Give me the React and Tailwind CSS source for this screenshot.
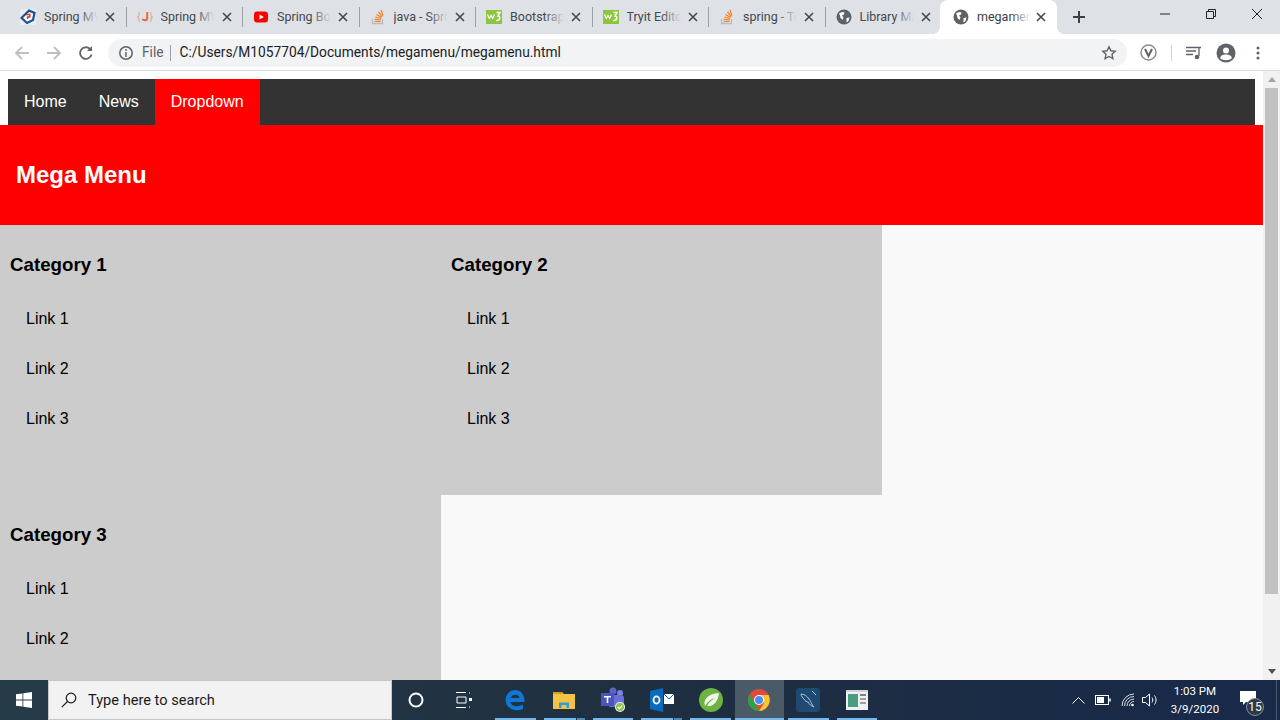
const Close = ({ dark }) => (
  <svg width="10" height="10" viewBox="0 0 10 10" className="shrink-0" fill="none" stroke={dark ? "#3c4043" : "#45484c"} strokeWidth="1.6">
    <path d="M1 1l8 8M9 1l-8 8" />
  </svg>
);
const Globe = () => (
  <svg width="16" height="16" viewBox="0 0 16 16" className="shrink-0">
    <circle cx="8" cy="8" r="7.500" fill="#5f6368" />
    <path d="M3 4.500l3-1.500 2.500.5-.5 2-2 1 1.500 2-1 2.500-2-2-.5-2.500zM10.500 9l3-.5-1 3.500-2 1.500z" fill="#fff" />
  </svg>
);
const Pf = () => (
  <svg width="16" height="16" viewBox="0 0 16 16" className="shrink-0">
    <rect x="0" y="0" width="16" height="16" fill="#e8edf5" />
    <path d="M9 1.500l5.500 2.500-1.500 7-6 3-5.500-5z" fill="#fff" stroke="#1b4f8f" strokeWidth="2.200" />
    <path d="M6 5.500h3.800v2.500H7.500v2" fill="none" stroke="#d9342b" strokeWidth="1.400" />
  </svg>
);
const J = () => (
  <svg width="16" height="16" viewBox="0 0 16 16" className="shrink-0" fill="none" stroke="#f0653b">
    <path d="M3 3.500c-1.500 0-1 1-1 2.500S1 8 .5 8c.5 0 1.500.5 1.500 2s-.5 2.500 1 2.500M13 3.500c1.500 0 1 1 1 2.500s1 2 1.500 2c-.5 0-1.500.5-1.500 2s.5 2.500-1 2.500" strokeWidth=".8" opacity=".7" />
    <path d="M10.200 3V9.500c0 2.300-3.700 2.300-4.700 .5" strokeWidth="2" />
  </svg>
);
const Yt = () => (
  <svg width="16" height="16" viewBox="0 0 16 16" className="shrink-0">
    <rect x="1" y="2.500" width="14" height="11" rx="3" fill="#f00" />
    <path d="M6.500 5.500v5L10.800 8z" fill="#fff" />
  </svg>
);
const So = () => (
  <svg width="16" height="16" viewBox="0 0 16 16" className="shrink-0" fill="none">
    <path d="M2.500 10v4.500h10V10" stroke="#bcbbbb" strokeWidth="1.300" />
    <path d="M4.500 12.500h6M4.700 10.300l6 .6M5.300 8l5.800 1.500M6.500 5.500l5.200 3M8.500 3l3.800 4.600M11 1l2 5.500" stroke="#f48024" strokeWidth="1.200" />
  </svg>
);
const W3 = () => (
  <svg width="16" height="16" viewBox="0 0 16 16" className="shrink-0">
    <rect width="16" height="14" y="1" fill="#8cc63f" />
    <path d="M1.500 5.500l1.800 4 1.700-3 1.700 3 1.800-4" fill="none" stroke="#fff" strokeWidth="1.200" />
    <path d="M10.500 3.500H14l-2 3.500c2.500 0 2.800 5-1.800 4.500" fill="none" stroke="#fff" strokeWidth="1.500" />
  </svg>
);

const tabs = [
  { icon: <Pf />, t: "Spring MVC" },
  { icon: <J />, t: "Spring MVC" },
  { icon: <Yt />, t: "Spring Boot" },
  { icon: <So />, t: "java - Spring" },
  { icon: <W3 />, t: "Bootstrap" },
  { icon: <W3 />, t: "Tryit Editor" },
  { icon: <So />, t: "spring - Tomcat" },
  { icon: <Globe />, t: "Library Ma" },
];

function Tab({ icon, t, active, last }) {
  return (
    <div className={"relative flex items-center h-[34px] shrink-0 " + (active ? "w-[117px] -ml-[1px] pl-[13px] pr-[11px] bg-white rounded-t-[8px]" : "w-[116.500px] pl-[11px] pr-[10.500px]")}>
      {active && <div className="absolute -left-[8px] bottom-0 w-[8px] h-[8px] bg-[radial-gradient(circle_at_0_0,transparent_8px,white_8px)]" />}
      {active && <div className="absolute -right-[8px] bottom-0 w-[8px] h-[8px] bg-[radial-gradient(circle_at_100%_0,transparent_8px,white_8px)]" />}
      {icon}
      <div className={"relative ml-[8px] w-[54px] overflow-hidden whitespace-nowrap text-[12.500px] font-['Roboto','Noto_Sans',sans-serif] " + (active ? "text-[#3c4043]" : "text-[#45484c]")}>
        {t}
        <div className={"absolute right-0 top-0 bottom-0 w-[20px] bg-gradient-to-r from-transparent " + (active ? "to-white" : "to-[#dee1e6]")} />
      </div>
      <div className="ml-auto flex"><Close /></div>
      {!active && !last && <div className="absolute -right-px top-[7px] h-[20px] w-px bg-[#9aa0a6]" />}
    </div>
  );
}

const Win = () => (
  <div className="w-[48px] h-full flex items-center justify-center">
    <svg width="16" height="16" viewBox="0 0 16 16" fill="#fff"><path d="M0 2.300l6.500-.9v6.200H0zM7.300 1.300L16 0v7.600H7.300zM0 8.400h6.500v6.200L0 13.700zM7.300 8.400H16V16l-8.700-1.200z" /></svg>
  </div>
);

const TaskItem = ({ children, active, split }) => (
  <div className={"relative w-[48.800px] h-full flex items-center justify-center shrink-0 " + (active ? "bg-[#4a5a66]" : "")}>
    {children}
    <div className={"absolute bottom-0 h-[2px] flex " + (active ? "left-0 right-0" : "left-[4px] right-[4px]")}>
      <div className="flex-1 bg-[#76b9ed]" />
      {split && <div className="w-[8px] bg-[#4a8cbf] ml-[1px]" />}
    </div>
  </div>
);

function Column({ title, links }) {
  return (
    <div className="w-[441px] h-[270px] bg-[#ccc] pl-[10px] font-['Liberation_Sans',Arial,sans-serif] text-black">
      <h3 className="pt-[28px] text-[18.720px] leading-[24px] h-[52px] font-bold">{title}</h3>
      <div className="pt-[17px]">
        {links.map(l => (
          <div key={l} className="h-[50px] pl-[16px] text-[16px] leading-[50px]">{l}</div>
        ))}
      </div>
    </div>
  );
}

export default function App() {
  const links = ["Link 1", "Link 2", "Link 3"];
  return (
    <div className="w-[1280px] h-[720px] flex flex-col overflow-hidden bg-white">
      <div className="h-[34px] bg-[#dee1e6] flex shrink-0 pl-[9px]">
        {tabs.map((x, i) => <Tab key={i} {...x} last={i === 7} />)}
        <Tab icon={<Globe />} t="megamenu.html" active />
        <div className="w-[44px] h-full flex items-center justify-center">
          <svg width="14" height="14" viewBox="0 0 14 14" stroke="#3c4043" strokeWidth="2"><path d="M7 1v12M1 7h12" /></svg>
        </div>
        <div className="ml-auto flex h-[28px] items-center text-[#222]">
          <div className="w-[46px] flex justify-center"><svg width="10" height="10" viewBox="0 0 10 10" stroke="#222"><path d="M0 5h10" /></svg></div>
          <div className="w-[46px] flex justify-center"><svg width="10" height="10" viewBox="0 0 10 10" fill="none" stroke="#222"><path d="M.5 2.500h7v7h-7zM2.500 2.500v-2h7v7h-2" /></svg></div>
          <div className="w-[46px] flex justify-center"><svg width="12" height="12" viewBox="0 0 12 12" stroke="#222"><path d="M1 1l10 10M11 1L1 11" /></svg></div>
        </div>
      </div>
      <div className="h-[36px] shrink-0 flex items-center bg-white pt-[1px]">
        <div className="w-[108px] flex items-center pl-[14px] gap-[16px]">
          <svg width="16" height="16" viewBox="0 0 16 16" fill="none" stroke="#bcbfc4" strokeWidth="1.800"><path d="M15 8H2M8 2L2 8l6 6" /></svg>
          <svg width="16" height="16" viewBox="0 0 16 16" fill="none" stroke="#bcbfc4" strokeWidth="1.800"><path d="M1 8h13M8 2l6 6-6 6" /></svg>
          <svg width="16" height="16" viewBox="0 0 16 16" fill="none" stroke="#5f6368" strokeWidth="1.800"><path d="M13.500 9.500A5.800 5.800 0 1 1 12 4" /><path d="M14 1v5H9" fill="#5f6368" stroke="none" /></svg>
        </div>
        <div className="w-[1019px] h-[28px] rounded-full bg-[#f1f3f4] flex items-center pl-[10px] pr-[10px] font-['Roboto','Noto_Sans',sans-serif] text-[13.750px] text-[#202124]">
          <svg width="16" height="16" viewBox="0 0 16 16" fill="none" stroke="#5f6368" strokeWidth="1.500"><circle cx="8" cy="8" r="6.200" /><path d="M8 7v5M8 4v1.800" /></svg>
          <span className="ml-[8px] text-[#5f6368]">File</span>
          <span className="w-px h-[16px] bg-[#9aa0a6] ml-[6px] mr-[9px]" />
          <span>C:/Users/M1057704/Documents/megamenu/megamenu.html</span>
          <svg className="ml-auto" width="16" height="16" viewBox="0 0 16 16" fill="none" stroke="#5f6368" strokeWidth="1.400"><path d="M8 1.800l1.900 4 4.300.5-3.200 3 .9 4.300L8 11.500l-3.900 2.100.9-4.300-3.200-3 4.300-.5z" /></svg>
        </div>
        <div className="flex items-center ml-[13px]">
          <svg width="17" height="17" viewBox="0 0 17 17" fill="none"><circle cx="8.500" cy="8.500" r="7.500" stroke="#8a8d91" strokeWidth="1.500" /><path d="M5 5l3.500 7L12 5" stroke="#5f6368" strokeWidth="2" /></svg>
          <span className="w-px h-[16px] bg-[#d0d2d5] ml-[14px] mr-[14px]" />
          <svg width="16" height="14" viewBox="0 0 16 14" fill="none" stroke="#5f6368" strokeWidth="1.300"><path d="M0 1.500h15M0 5h10M0 8.500h7" /><path d="M13 2v8" /><circle cx="11" cy="11" r="2.300" fill="#5f6368" stroke="none" /></svg>
          <svg className="ml-[14px]" width="20" height="20" viewBox="0 0 20 20"><circle cx="10" cy="10" r="9.500" fill="#5f6368" /><circle cx="10" cy="7.500" r="3" fill="#fff" /><path d="M4 15c1-3 3.500-3.500 6-3.500s5 .5 6 3.500c-3 3-9 3-12 0z" fill="#fff" /></svg>
          <svg className="ml-[20px]" width="4" height="14" viewBox="0 0 4 14" fill="#5f6368"><circle cx="2" cy="2" r="1.500" /><circle cx="2" cy="7" r="1.500" /><circle cx="2" cy="12" r="1.500" /></svg>
        </div>
      </div>
      <div className="h-px bg-[#dadce0] shrink-0" />
      <div className="flex h-[609px] shrink-0 overflow-hidden">
        <div className="w-[1263px] bg-[#f9f9f9] overflow-hidden">
          <div className="pt-[8px] bg-white">
            <div className="ml-[8px] mr-[8px] h-[46px] bg-[#333] flex text-[16px] text-white font-['Liberation_Sans',Arial,sans-serif]">
              <div className="px-[16px] leading-[46px]">Home</div>
              <div className="px-[16px] leading-[46px]">News</div>
              <div className="px-[16px] leading-[46px] bg-[#f00]">Dropdown</div>
            </div>
          </div>
          <div className="h-[100px] bg-[#f00] pl-[16px] flex items-center text-[24px] font-bold text-white font-['Liberation_Sans',Arial,sans-serif]">Mega Menu</div>
          <div className="flex flex-wrap w-[882px]">
            <Column title="Category 1" links={links} />
            <Column title="Category 2" links={links} />
            <Column title="Category 3" links={links} />
          </div>
        </div>
        <div className="w-[17px] bg-[#f1f1f1] flex flex-col shrink-0">
          <div className="h-[17px] flex items-center justify-center">
            <svg width="8" height="5" viewBox="0 0 8 5" fill="#a3a3a3"><path d="M4 0l4 5H0z" /></svg>
          </div>
          <div className="h-[506px] ml-[2px] mr-[2px] bg-[#c1c1c1]" />
          <div className="mt-auto h-[17px] flex items-center justify-center">
            <svg width="8" height="5" viewBox="0 0 8 5" fill="#505050"><path d="M4 5l4-5H0z" /></svg>
          </div>
        </div>
      </div>
      <div className="h-[40px] shrink-0 bg-gradient-to-r from-[#253b47] via-[#1f2f40] to-[#18294a] flex items-center text-white font-['Open_Sans','Noto_Sans',sans-serif]">
        <Win />
        <div className="w-[344px] h-full bg-[#f2f2f2] border border-[#c8c8c8] flex items-center pl-[12px] text-[#1b1b1b]">
          <svg width="16" height="16" viewBox="0 0 16 16" fill="none" stroke="#1b1b1b" strokeWidth="1.200"><circle cx="10" cy="6" r="4.800" /><path d="M6.500 9.500L.8 15.200" /></svg>
          <span className="ml-[11px] pt-[2px] font-['Roboto',sans-serif] text-[14.600px]">Type here to search</span>
        </div>
        <div className="w-[48px] flex justify-center">
          <svg width="16" height="16" viewBox="0 0 16 16" fill="none" stroke="#fff" strokeWidth="2"><circle cx="8" cy="8" r="6.500" /></svg>
        </div>
        <div className="w-[47px] flex justify-center">
          <svg width="16" height="16" viewBox="0 0 16 16" fill="none" stroke="#fff"><path d="M0 .5h10M0 15.500h10M1 5h9v6H1zM13 1h1M13 15h1" /><rect x="13" y="6" width="3" height="3" fill="#fff" stroke="none" /></svg>
        </div>
        <div className="flex h-full ml-[4px]">
          <TaskItem>
            <svg width="22" height="22" viewBox="0 0 22 22" fill="none"><path d="M1.500 11C2 4 7 1 11.500 1S21 5 20.500 13H6.500c.3 4.500 7 5.500 12.500 2.500v4.500c-8 3.500-17 0-17.500-9zM6.700 9h8.800c0-4.500-8-4.500-8.800 0z" fill="#0f78d4" /></svg>
          </TaskItem>
          <TaskItem split>
            <svg width="22" height="20" viewBox="0 0 22 20"><path d="M0 2h9l2 2h11v15H0z" fill="#f5c344" /><path d="M0 2h9l1 2H0z" fill="#d69d1f" /><path d="M6 18v-5.500h10V18h-2.500v-3h-5v3z" fill="#2c9fd8" /></svg>
          </TaskItem>
          <TaskItem>
            <svg width="26" height="26" viewBox="0 0 26 26"><circle cx="20" cy="6" r="3" fill="#7b83eb" /><circle cx="13" cy="4" r="3.500" fill="#5c64c8" /><rect x="8" y="8" width="16" height="12" rx="3" fill="#6a71d6" /><rect x="1" y="6" width="13" height="13" fill="#4b53bc" /><path d="M4 9h7v1.600H8.300V16H6.700v-5.400H4z" fill="#fff" /><circle cx="20" cy="20" r="5" fill="#fff" /><circle cx="20" cy="20" r="4.200" fill="#92c353" /><path d="M17.800 20l1.600 1.600 2.800-3" stroke="#fff" strokeWidth="1.200" fill="none" /></svg>
          </TaskItem>
          <TaskItem split>
            <svg width="24" height="24" viewBox="0 0 24 24"><path d="M0 3l13-3v24L0 21z" fill="#0a6bbd" /><ellipse cx="6.500" cy="12" rx="3" ry="3.600" fill="none" stroke="#fff" strokeWidth="1.800" /><rect x="14" y="6" width="10" height="10" fill="#fff" /><path d="M14 6l5 5 5-5" fill="none" stroke="#0a6bbd" /></svg>
          </TaskItem>
          <TaskItem>
            <svg width="24" height="24" viewBox="0 0 24 24"><circle cx="12" cy="12" r="12" fill="#6db33f" /><path d="M6 18c-2-6 2-12 14-13-1 9-6 14-12 13 2-4 5-6 8-8-4 1-8 4-10 8z" fill="#f1f5ec" /></svg>
          </TaskItem>
          <TaskItem active>
            <svg width="22" height="22" viewBox="0 0 22 22"><circle cx="11" cy="11" r="11" fill="#dd4b3e" /><path d="M11 22A11 11 0 0 1 1.500 5.500L7 14z" fill="#2aa24a" /><path d="M11 6h9.500A11 11 0 0 1 11 22l5-8z" fill="#f9c633" /><circle cx="11" cy="11" r="5" fill="#fff" /><circle cx="11" cy="11" r="4" fill="#4d8df5" /></svg>
          </TaskItem>
          <TaskItem>
            <svg width="24" height="24" viewBox="0 0 24 24"><rect width="24" height="24" rx="3" fill="#1e4a73" /><path d="M5 6c3 0 6 2 8 5 2 3 3 6 5 8-3-1-5-3-6-5-1 0-3-1-4-3-1-1-3-3-3-5zM16 3l4 4" fill="none" stroke="#b4c4d4" strokeWidth="1" /></svg>
          </TaskItem>
          <TaskItem>
            <svg width="22" height="20" viewBox="0 0 22 20"><rect width="22" height="20" fill="#eef0f1" /><rect x="0" y="0" width="22" height="2" fill="#cfd3d6" /><rect x="2" y="4" width="10" height="13" fill="#4b9a82" /><rect x="14" y="4" width="6" height="2" fill="#7a8288" /><rect x="14" y="8" width="6" height="2" fill="#9aa2a8" /><rect x="14" y="12" width="6" height="2" fill="#9aa2a8" /></svg>
          </TaskItem>
        </div>
        <div className="ml-auto flex items-center h-full">
          <svg width="13" height="7" viewBox="0 0 13 7" fill="none" stroke="#fff"><path d="M.5 6.500l6-6 6 6" /></svg>
          <svg className="ml-[10px]" width="16" height="10" viewBox="0 0 16 10" fill="none" stroke="#fff"><rect x=".5" y=".5" width="13" height="9" /><rect x="2" y="2" width="7" height="6" fill="#fff" stroke="none" /><path d="M15 3.500v3" strokeWidth="1.500" /></svg>
          <svg className="ml-[10px]" width="14" height="14" viewBox="0 0 14 14" fill="none" stroke="#d8dde2"><path d="M1 13A12 12 0 0 1 13 1M3.500 13A9.500 9.500 0 0 1 13 3.500M6 13A7 7 0 0 1 13 6M8.500 13A4.500 4.500 0 0 1 13 8.500" /><circle cx="11.500" cy="12" r="1.300" fill="#fff" stroke="none" /></svg>
          <svg className="ml-[7px]" width="16" height="14" viewBox="0 0 16 14" fill="none" stroke="#fff"><path d="M.5 4.500h3L7.500 1v12l-4-3.500h-3zM10 4.500c1 1.500 1 3.500 0 5M12.500 2.500c2 2.500 2 6.500 0 9" /></svg>
          <div className="w-[72px] ml-[1px] text-center text-[11.500px] leading-[18px] text-white font-['Roboto',sans-serif]">
            <div>1:03 PM</div>
            <div>3/9/2020</div>
          </div>
          <div className="relative w-[45px] h-full flex items-center justify-center">
            <svg width="16" height="14" viewBox="0 0 16 14" className="-mt-[5px] -ml-[12px]"><path d="M0 0h16v11H6l-3 3v-3H0z" fill="#fff" /></svg>
            <div className="absolute left-[15px] top-[18px] w-[18px] h-[18px] rounded-full bg-[#2b3a47] border border-[#8a8f93] text-[12px] leading-[16px] text-center text-white font-['Roboto',sans-serif]">15</div>
          </div>
          <div className="w-[4px] h-full border-l border-[#4a5b6b]" />
        </div>
      </div>
    </div>
  );
}
